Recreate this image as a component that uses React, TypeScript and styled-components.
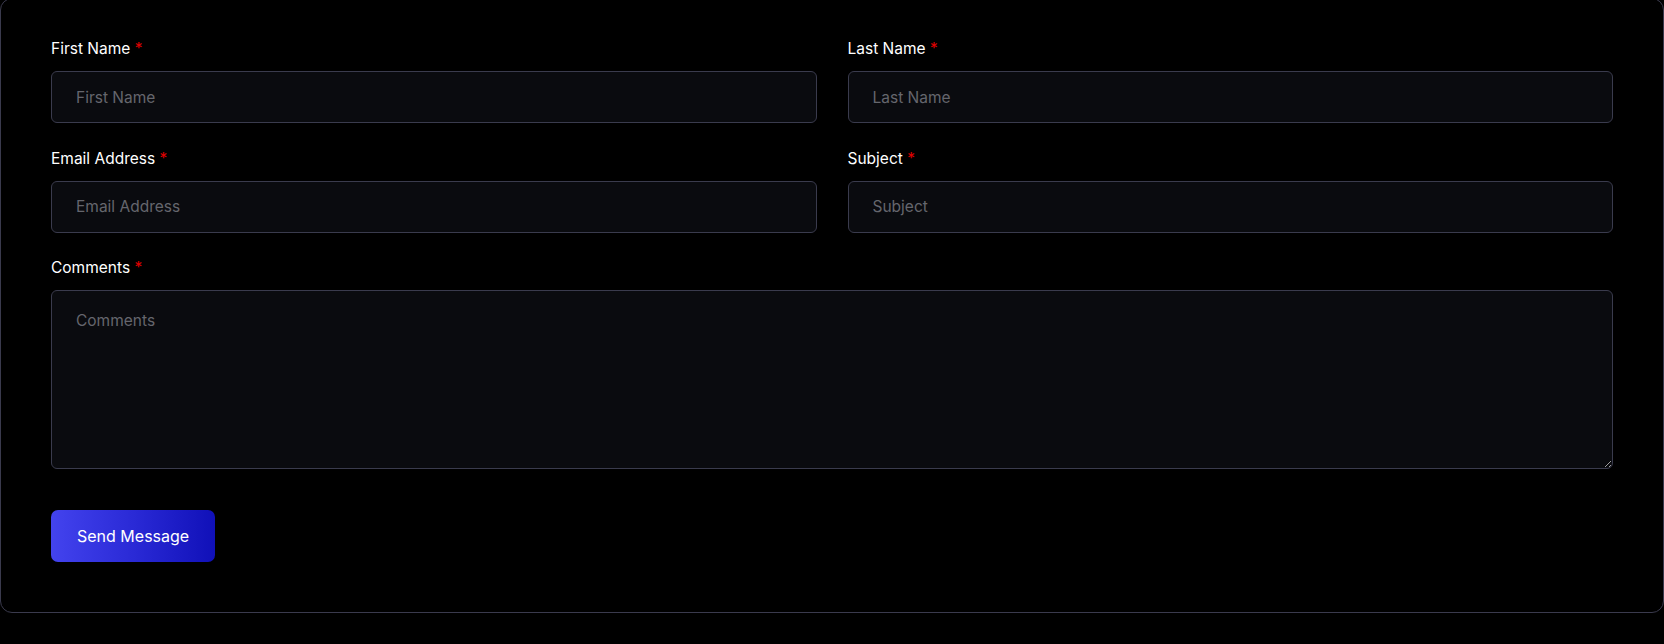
import React from "react";
import styled, { createGlobalStyle } from "styled-components";

const GlobalStyle = createGlobalStyle`
  html, body {
    margin: 0;
    padding: 0;
    background: #000;
  }
  body {
    width: 1664px;
    height: 644px;
    overflow: hidden;
    font-family: Inter, "Open Sans", "Liberation Sans", sans-serif;
    color: #fff;
  }
  * {
    box-sizing: border-box;
  }
`;

const Card = styled.form`
  margin-top: -2px;
  width: 1664px;
  border: 1px solid #3a3a4d;
  border-radius: 12px;
  padding: 39px 50px 50px 50px;
  background: #000;
`;

const Grid = styled.div`
  display: grid;
  grid-template-columns: 1fr 1fr;
  column-gap: 31px;
  row-gap: 24.5px;
`;

const Field = styled.div<{ $wide?: boolean }>`
  display: flex;
  flex-direction: column;
  row-gap: 11px;
  grid-column: ${(p) => (p.$wide ? "1 / -1" : "auto")};
`;

const Label = styled.label`
  font-size: 15.5px;
  line-height: 22px;
  font-weight: 400;
  color: #fff;
`;

const Star = styled.span`
  color: #e00000;
`;

const Input = styled.input`
  height: 52px;
  width: 100%;
  padding: 0 24px;
  background: #0a0b0f;
  border: 1px solid #3a3b4d;
  border-radius: 6px;
  color: #fff;
  font-family: inherit;
  font-size: 15.5px;
  outline: none;

  &::placeholder {
    color: #65666d;
  }
`;

const TextArea = styled.textarea`
  height: 179px;
  width: 100%;
  padding: 19px 24px;
  background: #0a0b0f;
  border: 1px solid #3a3b4d;
  border-radius: 6px;
  color: #fff;
  font-family: inherit;
  font-size: 15.5px;
  line-height: 22px;
  outline: none;
  resize: vertical;
  display: block;

  &::placeholder {
    color: #65666d;
  }
`;

const SendButton = styled.button`
  margin-top: 41px;
  height: 52px;
  padding: 0 26px;
  border: none;
  border-radius: 7px;
  background: linear-gradient(90deg, #4343ee 0%, #2a2ad6 50%, #1010b8 100%);
  color: #fff;
  font-family: inherit;
  font-size: 16px;
  cursor: pointer;
`;

const fields = [
  { id: "first", label: "First Name" },
  { id: "last", label: "Last Name" },
  { id: "email", label: "Email Address" },
  { id: "subject", label: "Subject" },
];

const App = () => {
  return (
    <>
      <GlobalStyle />
      <Card onSubmit={(e) => e.preventDefault()}>
        <Grid>
          {fields.map((f) => (
            <Field key={f.id}>
              <Label htmlFor={f.id}>
                {f.label} <Star>*</Star>
              </Label>
              <Input id={f.id} placeholder={f.label} />
            </Field>
          ))}
          <Field $wide>
            <Label htmlFor="comments">
              Comments <Star>*</Star>
            </Label>
            <TextArea id="comments" placeholder="Comments" />
          </Field>
        </Grid>
        <SendButton type="submit">Send Message</SendButton>
      </Card>
    </>
  );
};

export default App;
